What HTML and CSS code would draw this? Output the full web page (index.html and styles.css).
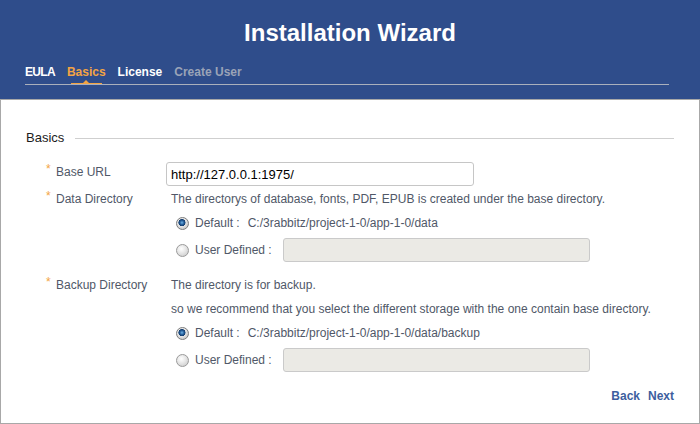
FILE: index.html
```html
<!DOCTYPE html>
<html>
<head>
<meta charset="utf-8">
<title>Installation Wizard</title>
<link rel="stylesheet" href="styles.css">
</head>
<body>
<div class="page">
  <header class="header">
    <h1 class="title">Installation Wizard</h1>
    <nav class="tabs">
      <span class="tab tab-done tab-eula">EULA</span>
      <span class="tab tab-active">Basics</span>
      <span class="tab tab-done">License</span>
      <span class="tab tab-todo">Create User</span>
    </nav>
  </header>
  <main class="content">
    <div class="legend"><span class="legend-text">Basics</span><span class="legend-line"></span></div>

    <div class="field field-url">
      <div class="label label-short"><span class="star">*</span><span class="label-text">Base URL</span></div>
      <div class="value">
        <input class="text-input" type="text" value="http://127.0.0.1:1975/">
      </div>
    </div>

    <div class="field field-data">
      <div class="label"><span class="star">*</span><span class="label-text">Data Directory</span></div>
      <div class="value">
        <div class="line">The directorys of database, fonts, PDF, EPUB is created under the base directory.</div>
        <div class="radio-line">
          <span class="radio radio-on"></span><span class="radio-label">Default :</span><span class="path">C:/3rabbitz/project-1-0/app-1-0/data</span>
        </div>
        <div class="radio-line radio-line-input">
          <span class="radio"></span><span class="radio-label">User Defined :</span><input class="dir-input" type="text" disabled>
        </div>
      </div>
    </div>

    <div class="field field-backup">
      <div class="label"><span class="star">*</span><span class="label-text">Backup Directory</span></div>
      <div class="value">
        <div class="line">The directory is for backup.</div>
        <div class="line">so we recommend that you select the different storage with the one contain base directory.</div>
        <div class="radio-line">
          <span class="radio radio-on"></span><span class="radio-label">Default :</span><span class="path">C:/3rabbitz/project-1-0/app-1-0/data/backup</span>
        </div>
        <div class="radio-line radio-line-input">
          <span class="radio"></span><span class="radio-label">User Defined :</span><input class="dir-input" type="text" disabled>
        </div>
      </div>
    </div>

    <div class="actions">
      <a class="action">Back</a>
      <a class="action">Next</a>
    </div>
  </main>
</div>
</body>
</html>
```

FILE: styles.css
```css
* {
  box-sizing: border-box;
}

html, body {
  margin: 0;
  padding: 0;
  background: #ffffff;
}

body {
  font-family: "Liberation Sans", Arial, sans-serif;
  font-size: 12px;
  color: #505868;
}

.page {
  width: 700px;
  height: 424px;
  display: flex;
  flex-direction: column;
}

.header {
  height: 99px;
  background: #2f4d8b;
  padding: 19px 31px 0 25px;
}

.title {
  margin: 0;
  font-size: 24px;
  line-height: 28px;
  font-weight: bold;
  color: #ffffff;
  text-align: center;
  padding-left: 6px;
}

.tabs {
  margin-top: 18px;
  display: flex;
  gap: 12px;
  border-bottom: 1px solid #aab0bc;
  padding-bottom: 5px;
}

.tab {
  position: relative;
  font-size: 12px;
  line-height: 14px;
  font-weight: bold;
}

.tab-eula {
  letter-spacing: -0.7px;
}

.tab-done {
  color: #ffffff;
}

.tab-active {
  color: #f3a443;
}

.tab-todo {
  color: #9aa3b7;
}

.tab-active::after {
  content: "";
  position: absolute;
  left: 4px;
  right: 4px;
  bottom: -5px;
  height: 1px;
  background: #f3a443;
}

.tab-active::before {
  content: "";
  position: absolute;
  left: 50%;
  bottom: -4px;
  margin-left: -3px;
  width: 0;
  height: 0;
  border-left: 3px solid transparent;
  border-right: 3px solid transparent;
  border-bottom: 3px solid #f3a443;
}

.content {
  flex: 1;
  border: 1px solid #a8a8a8;
  padding: 30px 25px 0 25px;
}

.legend {
  display: flex;
  align-items: center;
  height: 16px;
}

.legend-text {
  font-size: 13px;
  line-height: 16px;
  color: #1c1c1c;
}

.legend-line {
  flex: 1;
  height: 1px;
  background: #cfcfcf;
  margin-left: 11px;
}

.field {
  display: grid;
  grid-template-columns: 140px 1fr;
}

.field-url {
  margin-top: 16px;
}

.field-data {
  margin-top: 1px;
}

.field-backup {
  margin-top: 11px;
}

.label {
  display: flex;
  align-items: flex-start;
  padding-left: 20px;
  white-space: nowrap;
}

.label-text {
  line-height: 24px;
}

.star {
  width: 10px;
  flex: none;
  color: #f3a443;
  line-height: 18px;
}

.label-short .label-text {
  line-height: 20px;
}

.label-short .star {
  line-height: 14px;
}

.value {
  display: flex;
  flex-direction: column;
}

.text-input {
  width: 308px;
  height: 24px;
  border: 1px solid #c6c6c6;
  border-radius: 3px;
  padding: 0 4px;
  font-family: "Liberation Sans", Arial, sans-serif;
  font-size: 13px;
  color: #000000;
  background: #ffffff;
  outline: none;
}

.line {
  padding-left: 5px;
  line-height: 24px;
  white-space: nowrap;
}

.radio-line {
  display: flex;
  align-items: center;
  height: 24px;
  padding-left: 10px;
  white-space: nowrap;
}

.radio-line-input {
  margin-top: 3px;
}

.radio {
  width: 13px;
  height: 13px;
  border-radius: 50%;
  border: 1px solid #9a9a9a;
  background: radial-gradient(circle at 40% 35%, #ffffff 0, #e6e6e6 45%, #c4c4c4 100%);
  margin-right: 6px;
  flex: none;
}

.radio-on {
  border-color: #7d7d7d;
  background:
    radial-gradient(circle at 45% 42%, #6fb3e6 0, #1f5793 2.2px, #133d6e 3.3px, transparent 3.8px),
    radial-gradient(circle at 40% 35%, #ffffff 0, #e2e2e2 50%, #b8b8b8 100%);
}

.radio-label {
  line-height: 24px;
}

.path {
  margin-left: 8px;
  line-height: 24px;
}

.dir-input {
  width: 307px;
  height: 24px;
  margin-left: 11px;
  border: 1px solid #cacaca;
  border-radius: 3px;
  background: #ebeae5;
  outline: none;
}

.actions {
  margin-top: 12px;
  display: flex;
  justify-content: flex-end;
  gap: 8px;
  line-height: 24px;
}

.action {
  font-weight: bold;
  color: #3d5e9e;
  cursor: pointer;
}
```
